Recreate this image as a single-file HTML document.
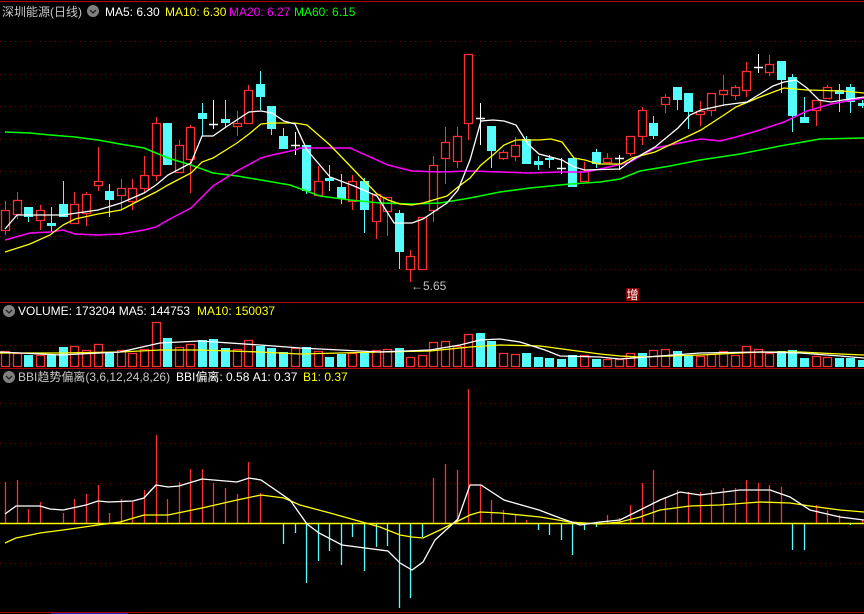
<!DOCTYPE html>
<html><head><meta charset="utf-8"><style>
html,body{margin:0;padding:0;background:#000;width:864px;height:614px;overflow:hidden}
svg{display:block}
text{font-family:"Liberation Sans","Noto Sans CJK SC",sans-serif;font-size:12px}
</style></head><body>
<svg id="s" width="864" height="614" xmlns="http://www.w3.org/2000/svg">
<rect width="864" height="614" fill="#000"/>
<g id="g"></g>
<line x1="0" y1="1.5" x2="864" y2="1.5" stroke="#b00000"/>
<line x1="0" y1="302.5" x2="864" y2="302.5" stroke="#b00000"/>
<line x1="0" y1="368.5" x2="864" y2="368.5" stroke="#b00000"/>
<line x1="0" y1="612.5" x2="864" y2="612.5" stroke="#b00000"/>
<line x1="51" y1="613.5" x2="128" y2="613.5" stroke="#2020c0"/>
<text x="2" y="16" fill="#c8c8c8">深圳能源(日线)</text>
<circle cx="93" cy="11" r="6" fill="#808080"/><path d="M90 10 L93 13 L96 10" stroke="#222" fill="none" stroke-width="1.3"/>
<text x="105" y="16" fill="#fff">MA5: 6.30</text>
<text x="165" y="16" fill="#ffff00">MA10: 6.30</text>
<text x="229" y="16" fill="#ff00ff">MA20: 6.27</text>
<text x="294" y="16" fill="#00ff00">MA60: 6.15</text>
<circle cx="9" cy="311" r="6" fill="#808080"/><path d="M6 310 L9 313 L12 310" stroke="#222" fill="none" stroke-width="1.3"/>
<text x="18" y="315" fill="#fff">VOLUME: 173204  MA5: 144753</text>
<text x="197" y="315" fill="#ffff00">MA10: 150037</text>
<circle cx="9" cy="377" r="6" fill="#808080"/><path d="M6 376 L9 379 L12 376" stroke="#222" fill="none" stroke-width="1.3"/>
<text x="18" y="381" fill="#c8c8c8">BBI趋势偏离(3,6,12,24,8,26)</text>
<text x="176" y="381" fill="#fff">BBI偏离: 0.58  A1: 0.37</text>
<text x="303" y="381" fill="#ffff00">B1: 0.37</text>
<text x="411" y="290" fill="#c0c0c0">←5.65</text>
<rect x="626" y="288" width="13" height="13" fill="#8b0000"/>
<text x="626.5" y="299" fill="#fff" style="font-size:12px">增</text>
</svg>
<script>
var g=document.getElementById('g'),h='';
function L(x1,y1,x2,y2,c,w,d){h+='<line x1="'+x1+'" y1="'+y1+'" x2="'+x2+'" y2="'+y2+'" stroke="'+c+'" stroke-width="'+(w||1)+'"'+(d?' stroke-dasharray="'+d+'"':'')+'/>';}
[41,74,106,139,171,204,236,269,345,403,443,483,563].forEach(function(y){L(0,y+.5,864,y+.5,'#780000',1,'1,4');});
var C=[['r',210,230,201,235],['r',200,214,192,219],['c',207,217,207,222],['r',210,220,205,230],['c',223,226,207,232],['c',204,217,181,217],['r',204,223,192,223],['r',194,213,192,226],['r',181,185,147,191],['c',191,200,184,217],['r',188,195,179,210],['r',188,201,179,210],['r',175,188,156,193],['r',123,175,117,181],['c',123,165,123,165],['r',145,172,140,172],['r',127,159,125,193],['c',113,119,103,136],['w',124,124,100,129],['c',119,123,100,128],['r',123,126,111,136],['r',90,123,85,123],['c',84,97,71,110],['c',106,129,106,135],['c',136,149,128,149],['w',145,145,132,155],['c',145,191,145,194],['r',181,195,166,196],['c',178,181,165,191],['c',187,199,174,204],['r',181,201,175,210],['c',181,210,178,233],['r',194,221,194,239],['r',197,211,197,236],['c',213,252,210,269],['r',256,269,250,282],['r',217,269,217,269],['r',165,210,156,222],['r',142,158,127,184],['r',136,161,127,168],['r',54,123,54,140],['w',118,118,103,145],['c',126,151,126,168],['r',152,158,150,160],['r',145,156,137,161],['c',139,164,136,164],['c',161,165,156,170],['c',158,160,155,168],['w',168,168,158,174],['c',158,187,158,187],['r',171,181,162,181],['c',152,164,149,168],['r',158,162,153,163],['w',158,158,155,170],['r',136,153,136,156],['r',110,136,107,145],['c',123,136,116,139],['r',97,104,94,113],['c',87,100,87,110],['c',93,112,93,129],['r',111,114,101,126],['r',93,110,93,116],['r',90,94,75,106],['r',87,95,85,100],['r',71,90,62,97],['w',67,67,54,73],['r',64,72,55,76],['c',61,80,61,93],['c',77,116,74,132],['c',117,123,97,123],['r',100,110,100,126],['r',87,98,85,98],['c',90,94,84,112],['c',87,102,84,113],['c',103,106,100,108]];
function X(i){return Math.round(5+i*11.58);}
C.forEach(function(k,i){var x=X(i),t=k[0];
 if(t=='w'){L(x+.5,k[3],x+.5,k[4],'#fff');L(x-4,k[1]+.5,x+5,k[1]+.5,'#fff',1.5);return;}
 var col=t=='r'?'#ff3030':'#54fcfc';
 L(x+.5,k[3],x+.5,k[4],col);
 var hh=Math.max(k[2]-k[1],2);
 if(t=='r')h+='<rect x="'+(x-3.5)+'" y="'+(k[1]+.5)+'" width="8" height="'+hh+'" fill="#000" stroke="'+col+'" stroke-width="1.3"/>';
 else h+='<rect x="'+(x-4)+'" y="'+k[1]+'" width="9" height="'+hh+'" fill="'+col+'"/>';
});
function P(a,c,w){h+='<polyline fill="none" stroke="'+c+'" stroke-width="'+(w||1.3)+'" points="'+a.join(' ')+'"/>';}
P(['5,132','30,133','50,135','75,137','98,140','120,144','144,148','168,158','191,165','213,173','237,176','261,180','290,185','320,196','350,200','380,203','412,204','440,203','470,198','500,192','530,188','570,184','600,182','620,179','640,171','670,166','700,160','740,154','780,146','820,139','864,138'],'#00ff00',1.5);
P(['5,240','30,233','50,232','63,230','75,234','98,235','121,234','144,230','156,227','168,220','191,208','213,186','237,171','261,158','272,155','295,150','300,148','350,148','388,165','412,171','440,172','470,171','500,172','530,173','560,172','585,172','600,169','630,162','655,148','690,141','701,139','720,141','736,137','760,130','784,122','807,111','831,104','864,98'],'#ff00ff',1.5);
P(['5,252','30,244','50,235','63,225','75,219','98,214','121,210','144,198','156,192','168,185','191,173','202,162','213,158','237,143','249,134','261,124','272,123','295,123','307,125','330,145','354,170','377,194','388,200','400,204','412,205','423,203','447,196','458,187','470,178','481,165','493,155','504,145','516,140','539,140','551,139','562,142','574,158','585,160','598,164','621,164','632,158','655,152','678,141','701,130','724,115','736,107','760,97','784,88','807,90','843,91','864,93'],'#ffff00');
P(['5,229','17,215','63,215','98,210','121,203','144,193','156,185','168,175','191,163','202,136','213,136','226,127','249,112','261,111','272,113','284,121','295,124','307,150','330,177','354,186','377,196','394,223','412,223','423,219','447,203','458,190','470,160','481,121','493,120','504,121','516,125','528,144','539,154','562,160','574,167','585,170','620,169','632,160','655,147','678,128','690,115','701,110','724,105','747,102','760,94','773,86','784,82','796,80','807,88','819,100','831,102','843,100','864,97'],'#fff');
var V=[['r',351],['r',353],['c',355],['r',355],['c',355],['c',347],['r',346],['r',350],['r',344],['c',352],['r',350],['r',353],['r',349],['r',322],['c',338],['r',347],['r',344],['c',340],['c',339],['c',348],['r',349],['r',340],['c',346],['c',348],['c',352],['r',348],['c',347],['r',351],['c',357],['c',354],['r',353],['c',352],['r',350],['r',349],['c',348],['r',357],['r',355],['r',342],['r',341],['r',346],['r',334],['c',333],['c',341],['r',353],['r',354],['c',353],['c',357],['c',358],['c',359],['c',355],['r',355],['c',359],['r',359],['r',359],['r',353],['c',353],['r',350],['r',349],['c',351],['c',355],['r',356],['r',354],['r',351],['r',355],['r',346],['r',349],['r',353],['c',351],['c',350],['c',358],['r',356],['r',357],['c',358],['c',358],['c',360]];
V.forEach(function(k,i){var x=X(i);
 if(k[0]=='r')h+='<rect x="'+(x-3.5)+'" y="'+(k[1]+.5)+'" width="8" height="'+(366-k[1])+'" fill="#000" stroke="#ff3030" stroke-width="1.3"/>';
 else h+='<rect x="'+(x-4)+'" y="'+k[1]+'" width="9" height="'+(367-k[1])+'" fill="#54fcfc"/>';});
P(['0,353','60,353','120,352','160,350','200,350','260,352','300,354','380,352','430,351','470,347','500,345','540,346','570,350','600,354','620,356','640,357','700,355','760,352','800,352','840,354','864,355'],'#ffff00');
P(['0,352','60,355','120,352','160,343','200,341','260,345','300,348','380,352','430,350','460,345','480,340','500,339','520,342','545,350','560,356','600,357','620,359','660,356','700,353','760,352','800,353','840,356','864,358'],'#fff');
var B=[482,480,509,502,523,513,499,494,485,513,499,502,490,435,499,482,469,469,483,488,494,462,493,523,544,533,583,561,551,565,537,571,547,546,608,598,537,478,464,470,389,485,500,510,515,520,530,535,540,555,530,527,515,518,505,483,470,497,490,492,492,490,488,488,480,483,485,487,550,550,505,510,515,525,520];
B.forEach(function(v,i){var x=X(i)+.5;if(v==523)return;L(x,523,x,v,v<523?'#ff3030':'#54fcfc',1.3);});
L(0,523.5,864,523.5,'#ffff00',1.5);
P(['5,543','16,538','40,533','63,530','98,525','120,522','144,515','168,515','202,508','237,500','261,495','284,498','300,505','330,513','355,520','380,527','400,535','412,537','423,538','440,530','470,515','480,512','500,513','540,517','570,522','600,524','620,522','640,517','660,510','690,506','720,505','760,502','790,503','810,506','840,510','864,512'],'#ffff00');
P(['5,514','16,506','40,506','50,509','63,510','86,505','98,501','109,502','133,501','144,498','156,485','168,487','179,486','202,479','237,482','249,478','261,480','290,500','307,524','319,533','342,545','365,548','388,551','400,563','412,570','423,562','435,540','458,519','470,485','481,485','504,500','539,510','560,518','580,525','600,522','620,520','640,510','660,500','680,492','700,495','740,490','770,490','790,497','810,510','840,517','864,520'],'#fff');
g.innerHTML=h;
</script>
</body></html>
